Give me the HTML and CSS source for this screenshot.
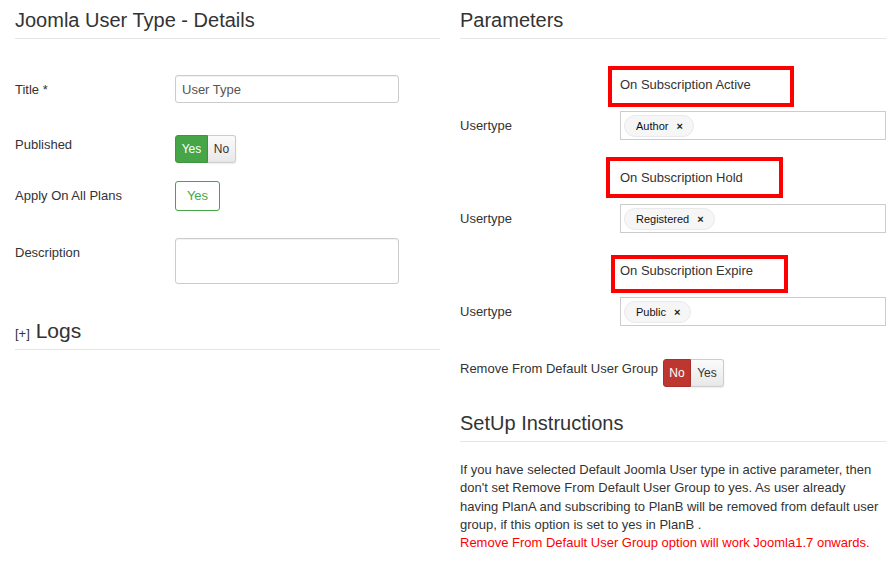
FILE: index.html
```html
<!DOCTYPE html>
<html>
<head>
<meta charset="utf-8">
<link rel="stylesheet" href="styles.css">
</head>
<body>
<div class="page">
  <div class="col">
    <h3 class="section-title">Joomla User Type - Details</h3>
    <div class="row row-title">
      <label class="lbl">Title *</label>
      <input class="text-input" type="text" value="User Type">
    </div>
    <div class="row row-published">
      <label class="lbl lbl-top">Published</label>
      <div class="toggle">
        <span class="seg seg-green">Yes</span><span class="seg seg-plain">No</span>
      </div>
    </div>
    <div class="row row-apply">
      <label class="lbl">Apply On All Plans</label>
      <span class="btn-outline">Yes</span>
    </div>
    <div class="row row-desc">
      <label class="lbl">Description</label>
      <textarea class="text-area"></textarea>
    </div>
    <h3 class="section-title logs-title"><span class="expander">[+]</span> Logs</h3>
  </div>

  <div class="col">
    <h3 class="section-title">Parameters</h3>

    <div class="sub sub-1"><span class="sub-text">On Subscription Active<span class="mark mark-a"></span></span></div>
    <div class="row row-user">
      <label class="lbl lbl-user">Usertype</label>
      <div class="multi"><span class="chip">Author <b class="chip-x">×</b></span></div>
    </div>

    <div class="sub sub-n"><span class="sub-text">On Subscription Hold<span class="mark mark-b"></span></span></div>
    <div class="row row-user">
      <label class="lbl lbl-user">Usertype</label>
      <div class="multi"><span class="chip">Registered <b class="chip-x">×</b></span></div>
    </div>

    <div class="sub sub-n"><span class="sub-text">On Subscription Expire<span class="mark mark-c"></span></span></div>
    <div class="row row-user">
      <label class="lbl lbl-user">Usertype</label>
      <div class="multi"><span class="chip">Public <b class="chip-x">×</b></span></div>
    </div>

    <div class="row row-remove">
      <label class="lbl-auto">Remove From Default User Group</label>
      <div class="toggle">
        <span class="seg seg-red">No</span><span class="seg seg-plain seg-yes">Yes</span>
      </div>
    </div>

    <h3 class="section-title setup-title">SetUp Instructions</h3>
    <p class="instructions">If you have selected Default Joomla User type in active parameter, then don't set Remove From Default User Group to yes. As user already having PlanA and subscribing to PlanB will be removed from default user group, if this option is set to yes in PlanB .<br><span class="warn">Remove From Default User Group option will work Joomla1.7 onwards.</span></p>
  </div>
</div>
</body>
</html>
```
FILE: styles.css
```css
* { box-sizing: border-box; }
html, body { margin: 0; padding: 0; background: #fff; }
body {
  font-family: "Liberation Sans", Arial, sans-serif;
  font-size: 13px;
  line-height: 18px;
  color: #333;
}
.page {
  display: grid;
  grid-template-columns: 425px 426px;
  column-gap: 20px;
  padding: 0 10px 0 15px;
}
.col { display: flex; flex-direction: column; }

.section-title {
  margin: 0;
  padding: 6px 0 4px;
  height: 39px;
  font-size: 20px;
  font-weight: normal;
  line-height: 28px;
  color: #333;
  border-bottom: 1px solid #e5e5e5;
}

.row { display: flex; align-items: flex-start; }
.lbl { width: 160px; flex: 0 0 160px; padding-top: 6px; }
.lbl-top { padding-top: 1px; }

.row-title { margin-top: 36px; }
.row-published { margin-top: 32px; }
.row-apply { margin-top: 18px; }
.row-desc { margin-top: 27px; }

.text-input {
  width: 224px;
  height: 28px;
  border: 1px solid #ccc;
  border-radius: 3px;
  padding: 0 6px;
  font-family: inherit;
  font-size: 13px;
  color: #555;
  box-shadow: inset 0 1px 1px rgba(0,0,0,0.06);
}
.text-area {
  width: 224px;
  height: 46px;
  border: 1px solid #ccc;
  border-radius: 3px;
  margin: 0;
  resize: none;
  box-shadow: inset 0 1px 1px rgba(0,0,0,0.06);
}

.toggle { display: flex; height: 28px; }
.seg {
  display: flex;
  align-items: center;
  justify-content: center;
  height: 28px;
  font-size: 12px;
}
.seg-green {
  width: 33px;
  background: #46a546;
  color: #fff;
  border: 1px solid #3f953f;
  border-radius: 3px 0 0 3px;
}
.seg-red {
  width: 28px;
  background: #bd362f;
  color: #fff;
  border: 1px solid #a9302a;
  border-radius: 3px 0 0 3px;
}
.seg-plain {
  width: 28px;
  background: linear-gradient(#fbfbfb, #e8e8e8);
  color: #333;
  border: 1px solid #ccc;
  border-left: 0;
  border-radius: 0 3px 3px 0;
  box-shadow: 0 1px 2px rgba(0,0,0,0.08);
}
.seg-yes { width: 33px; }

.btn-outline {
  display: flex;
  align-items: center;
  justify-content: center;
  width: 45px;
  height: 30px;
  border: 1px solid #46a546;
  border-radius: 3px;
  color: #46a546;
  font-size: 13px;
  background: #fff;
}

.logs-title { margin-top: 27px; font-size: 21px; }
.expander { font-size: 13px; line-height: 0; }

/* parameters */
.sub { padding-left: 160px; height: 18px; }
.sub-1 { margin-top: 36px; }
.sub-n { margin-top: 28px; }
.sub-text { position: relative; display: inline-block; padding-top: 1px; }
.mark {
  position: absolute;
  border: 4px solid #ff0000;
}
.mark-a { left: -12px; top: -9px; width: 186px; height: 41px; }
.mark-b { left: -14px; top: -11px; width: 177px; height: 41px; }
.mark-c { left: -9px; top: -6px; width: 177px; height: 38px; }

.row-user { margin-top: 18px; }
.lbl-user { padding-top: 6px; }
.multi {
  flex: 1;
  height: 29px;
  border: 1px solid #ccc;
  padding: 3px 3px;
  display: flex;
  align-items: center;
}
.chip {
  display: inline-flex;
  align-items: center;
  height: 22px;
  padding: 0 10px 0 11px;
  border: 1px solid #eaeaea;
  border-radius: 11px;
  background: #f6f6f6;
  color: #111;
  font-size: 11px;
}
.chip-x { font-size: 11px; margin-left: 8px; color: #222; }

.row-remove { margin-top: 33px; }
.lbl-auto { margin-right: 5px; padding-top: 1px; }

.setup-title { margin-top: 16px; }
.instructions { margin: 19px 0 0; line-height: 18.25px; }
.warn { color: #f00; }
```
